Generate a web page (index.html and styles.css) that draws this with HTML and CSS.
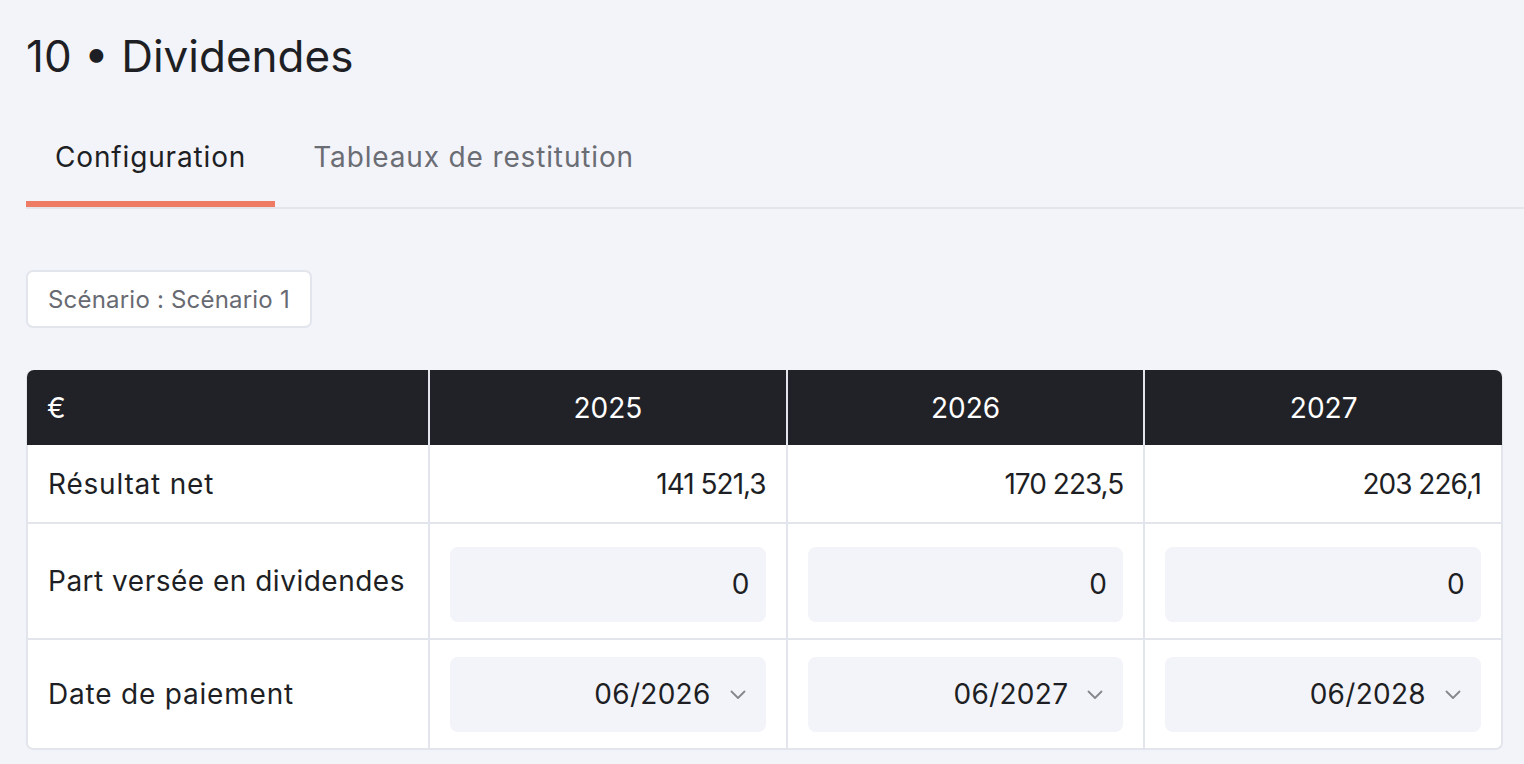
FILE: index.html
```html
<!DOCTYPE html>
<html lang="fr">
<head>
<meta charset="utf-8">
<link rel="stylesheet" href="styles.css">
</head>
<body>
<main class="page">
  <h1 class="title">10 • Dividendes</h1>
  <nav class="tabs">
    <div class="tab active">Configuration</div>
    <div class="tab">Tableaux de restitution</div>
  </nav>
  <div class="toolbar">
    <button class="scenario">Scénario : Scénario 1</button>
  </div>
  <div class="grid">
    <div class="hcell first">€</div>
    <div class="hcell">2025</div>
    <div class="hcell">2026</div>
    <div class="hcell last">2027</div>

    <div class="cell label r1">Résultat net</div>
    <div class="cell num r1">141 521,3</div>
    <div class="cell num r1">170 223,5</div>
    <div class="cell num r1">203 226,1</div>

    <div class="cell label r2">Part versée en dividendes</div>
    <div class="cell r2"><div class="field">0</div></div>
    <div class="cell r2"><div class="field">0</div></div>
    <div class="cell r2"><div class="field">0</div></div>

    <div class="cell label r3">Date de paiement</div>
    <div class="cell r3"><div class="field select"><span>06/2026</span><svg class="chev" viewBox="0 0 16 10" width="16" height="10"><path d="M1.5 1.5l6.5 6.5 6.5-6.5" fill="none" stroke="currentColor" stroke-width="1.8" stroke-linecap="round" stroke-linejoin="round"/></svg></div></div>
    <div class="cell r3"><div class="field select"><span>06/2027</span><svg class="chev" viewBox="0 0 16 10" width="16" height="10"><path d="M1.5 1.5l6.5 6.5 6.5-6.5" fill="none" stroke="currentColor" stroke-width="1.8" stroke-linecap="round" stroke-linejoin="round"/></svg></div></div>
    <div class="cell r3"><div class="field select"><span>06/2028</span><svg class="chev" viewBox="0 0 16 10" width="16" height="10"><path d="M1.5 1.5l6.5 6.5 6.5-6.5" fill="none" stroke="currentColor" stroke-width="1.8" stroke-linecap="round" stroke-linejoin="round"/></svg></div></div>
  </div>
</main>
</body>
</html>
```

FILE: styles.css
```css
* { box-sizing: border-box; }
html, body { margin: 0; padding: 0; }
body {
  background: #f3f4f9;
  font-family: Inter, "Noto Sans", sans-serif;
  color: #1e1f24;
}
.page {
  padding: 24px 0 0 26px;
}
.title {
  margin: 0;
  font-size: 44px;
  font-weight: 400;
  line-height: 64px;
}
.tabs {
  display: flex;
  margin-top: 37px;
  border-bottom: 2px solid #e3e5ec;
}
.tab {
  padding: 12px 29px 24px;
  font-size: 28px;
  line-height: 40px;
  letter-spacing: 0.85px;
  color: #6b6d75;
  border-bottom: 6px solid transparent;
}
.tab.active {
  color: #1e1f24;
  border-bottom-color: #ee7b63;
}
.tab + .tab { padding-left: 38px; }
.toolbar {
  margin-top: 61px;
  display: flex;
}
.scenario {
  font: inherit;
  font-size: 24px;
  letter-spacing: 0.2px;
  color: #686a72;
  background: #fff;
  border: 2px solid #e3e5ec;
  border-radius: 7px;
  height: 58px;
  padding: 0 20px;
}
.grid {
  margin-top: 42px;
  display: grid;
  grid-template-columns: 400px 1fr 1fr 1fr;
  grid-template-rows: 75px 77px 116px 110px;
  border: 2px solid #e3e5ec;
  border-top: 0;
  border-radius: 7px;
  background: #fff;
  width: 1477px;
}
.hcell {
  background: #212227;
  color: #fff;
  font-size: 28px;
  display: flex;
  align-items: center;
  justify-content: center;
  border-left: 2px solid #e3e5ec;
}
.hcell.first {
  justify-content: flex-start;
  padding-left: 20px;
  border-left: 0;
  border-top-left-radius: 7px;
  margin-left: -1px;
}
.hcell.last {
  border-top-right-radius: 7px;
  margin-right: -1px;
}
.cell {
  font-size: 28px;
  letter-spacing: 0.8px;
  white-space: nowrap;
  display: flex;
  align-items: center;
  border-left: 2px solid #e3e5ec;
  border-top: 2px solid #e3e5ec;
  padding: 0 20px;
}
.cell.r1 { border-top: 0; }
.cell.label { border-left: 0; }
.cell.r2.label { letter-spacing: 0.5px; }
.cell.num {
  justify-content: flex-end;
  letter-spacing: -1px;
}
.r2 .field { margin-top: 6px; }
.field {
  width: 100%;
  height: 75px;
  background: #f3f4f9;
  border-radius: 8px;
  display: flex;
  align-items: center;
  justify-content: flex-end;
  padding: 0 16px;
  font-size: 28px;
  letter-spacing: 0.3px;
}
.field.select { padding-right: 20px; gap: 19px; }
.chev { color: #85878f; flex: none; margin-top: 2px; }
```
